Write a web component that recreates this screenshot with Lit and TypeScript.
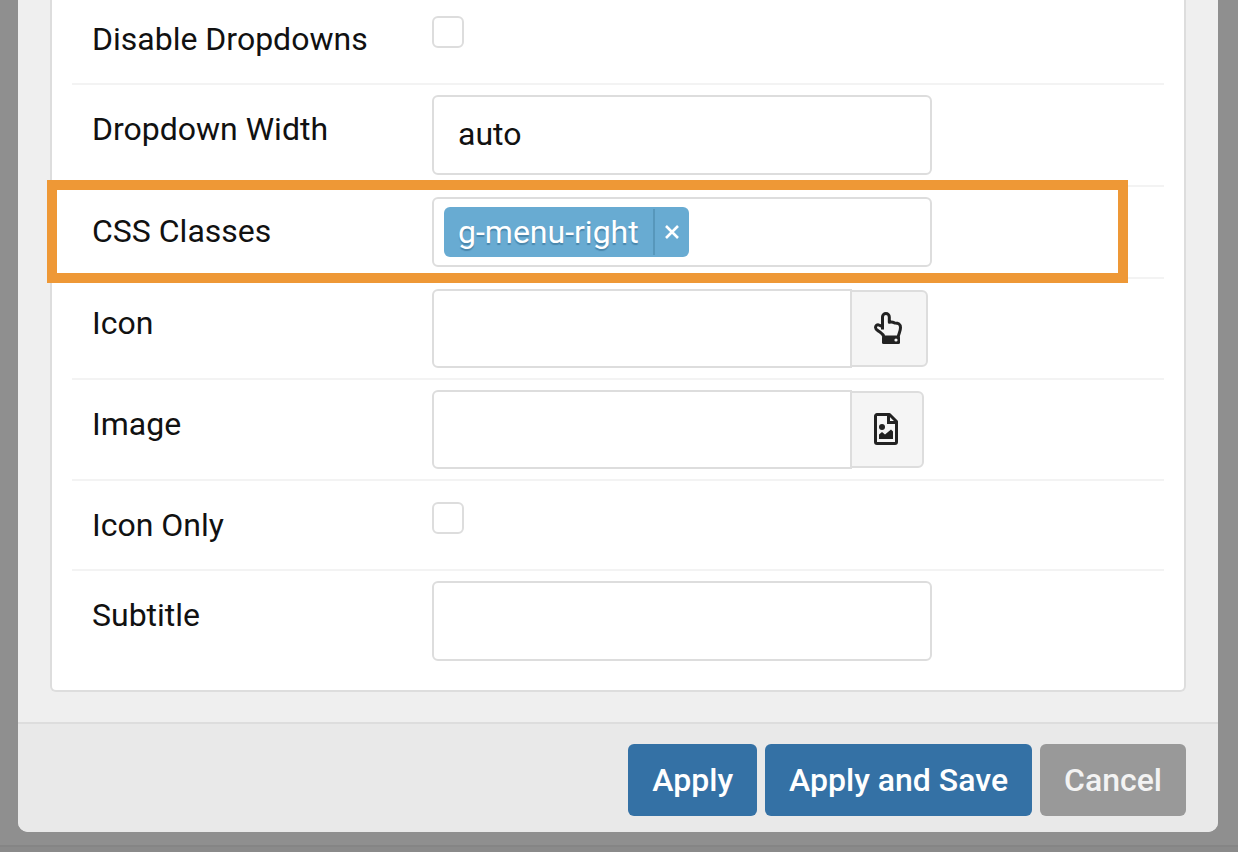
import { LitElement, html, css } from "lit";
import { customElement, state } from "lit/decorators.js";

const handIcon = html`<svg class="glyph" width="30" height="33" viewBox="0 0 30 33" aria-hidden="true">
  <path d="M8.500 17.500V5a3.400 3.400 0 0 1 6.800 0v5.300c2.600-.5 4 0 5.200.6 3.800-.2 6 1.300 6 4.600 0 3.900-1.900 6-2.300 9.500H10c-.6-3-2.600-4-4.800-5.500-2-1.300-3.700-1.900-3.700-3.900 0-1.900 1.300-2.900 3.100-2.700 1.500.2 2.600 1.200 3.900 1.700" fill="none" stroke="#222" stroke-width="3" stroke-linejoin="round"/>
  <rect x="8" y="24" width="18" height="8" rx="1.500" fill="#222"/>
  <circle cx="22" cy="28" r="1.600" fill="#f5f5f5"/>
</svg>`;

const imageIcon = html`<svg class="glyph" width="26" height="33" viewBox="0 0 26 33" aria-hidden="true">
  <path d="M3 1.500h12.500l7 7V29a1.500 1.500 0 0 1-1.500 1.500H3A1.500 1.500 0 0 1 1.500 29V3A1.500 1.500 0 0 1 3 1.500z" fill="none" stroke="#222" stroke-width="3" stroke-linejoin="round"/>
  <path d="M14.500 1.500v8h8" fill="none" stroke="#222" stroke-width="3"/>
  <circle cx="8" cy="14" r="3" fill="#222"/>
  <path d="M5 26v-4.500l3-2.500 3 2.500 6-5 2 2V26z" fill="#222"/>
</svg>`;

@customElement("app-root")
export class AppRoot extends LitElement {
  @state() private classes = ["g-menu-right"];

  static styles = css`
    :host {
      display: block;
      min-height: 100vh;
      overflow: hidden;
      box-sizing: border-box;
      background: #8f8f8f;
      font-family: Roboto, "Liberation Sans", sans-serif;
      font-size: 32px;
      line-height: 48px;
      color: #111;
    }
    * { box-sizing: border-box; }
    .modal {
      margin: 0 20px 0 18px;
      background: #efefef;
      border-radius: 0 0 10px 10px;
      overflow: hidden;
    }
    .body { padding: 0 32px 30px; }
    .card {
      margin-top: -5px;
      padding: 0 20px 19px;
      background: #fff;
      border: 2px solid #ddd;
      border-top: 0;
      border-radius: 0 0 6px 6px;
    }
    .row {
      position: relative;
      display: grid;
      grid-template-columns: 340px minmax(0, 1fr);
      align-items: start;
      padding: 10px 20px;
      border-bottom: 2px solid #f3f3f3;
    }
    .row:last-child { border-bottom: 0; }
    .name { padding: 10px 0; }
    .highlight::after {
      content: "";
      position: absolute;
      inset: -7px 36px -6px -25px;
      border: 10px solid #ee9836;
      pointer-events: none;
      z-index: 1;
    }
    .text, .tags {
      width: 100%;
      max-width: 500px;
      border: 2px solid #ddd;
      border-radius: 6px;
      background: #fff;
    }
    .text {
      display: block;
      height: 80px;
      padding: 0 24px 2px;
      font: inherit;
      color: inherit;
      outline: 0;
    }
    .check {
      appearance: none;
      display: block;
      width: 32px;
      height: 32px;
      margin: 11px 0 0;
      border: 2px solid #ddd;
      border-radius: 6px;
      background: #fff;
    }
    .tags { display: flex; height: 70px; padding: 8px 10px; }
    .tag {
      display: flex;
      height: 50px;
      background: #68abd2;
      border-radius: 6px;
      color: #fff;
      text-shadow: 0 2px 1px rgba(0, 51, 83, 0.3);
    }
    .tag-text { padding: 0 14px; line-height: 50px; }
    .remove {
      display: flex;
      align-items: center;
      justify-content: center;
      width: 36px;
      margin: 2px 0;
      padding: 0;
      border: 0;
      border-left: 2px solid #5797bb;
      background: none;
    }
    .tag-input {
      flex: 1;
      min-width: 0;
      border: 0;
      padding: 0 8px;
      font: inherit;
      outline: 0;
      background: none;
    }
    .group { display: flex; align-items: center; }
    .group .text { height: 79px; max-width: 420px; border-radius: 6px 0 0 6px; }
    .pick {
      display: flex;
      align-items: center;
      justify-content: center;
      height: 77px;
      margin-left: -2px;
      padding: 0 22px;
      border: 2px solid #ddd;
      border-radius: 0 6px 6px 0;
      background: #f5f5f5;
    }
    .glyph { display: block; }
    .footer {
      display: flex;
      justify-content: flex-end;
      gap: 8px;
      padding: 20px 32px 16px;
      border-top: 2px solid #ddd;
      background: #e9e9e9;
    }
    .button {
      height: 72px;
      padding: 0 24px;
      border: 0;
      border-radius: 6px;
      background: #3471a5;
      color: #fff;
      font: inherit;
      font-weight: 500;
    }
    .muted { background: #999; color: #f3f3f3; }
    .page-edge {
      height: 7px;
      margin-top: 13px;
      border-top: 2px solid #858585;
      background: #8a8a8a;
    }
  `;

  private remove(name: string) {
    this.classes = this.classes.filter((c) => c !== name);
  }

  render() {
    return html`
      <div class="modal" role="dialog" aria-label="Menu item">
        <div class="body">
          <div class="card">
            <div class="row">
              <label class="name" for="disable">Disable Dropdowns</label>
              <input class="check" id="disable" type="checkbox" />
            </div>
            <div class="row">
              <label class="name" for="width">Dropdown Width</label>
              <input class="text" id="width" type="text" value="auto" />
            </div>
            <div class="row highlight">
              <label class="name" for="classes">CSS Classes</label>
              <div class="tags">
                ${this.classes.map(
                  (name) => html`<span class="tag">
                    <span class="tag-text">${name}</span>
                    <button class="remove" aria-label="Remove ${name}" @click=${() => this.remove(name)}>
                      <svg width="16" height="16" viewBox="0 0 16 16" aria-hidden="true">
                        <path d="M2 2l12 12M14 2L2 14" stroke="#fff" stroke-width="2.600" />
                      </svg>
                    </button>
                  </span>`
                )}
                <input class="tag-input" id="classes" type="text" />
              </div>
            </div>
            <div class="row">
              <label class="name" for="icon">Icon</label>
              <div class="group">
                <input class="text" id="icon" type="text" />
                <button class="pick" aria-label="Pick an icon">${handIcon}</button>
              </div>
            </div>
            <div class="row">
              <label class="name" for="image">Image</label>
              <div class="group">
                <input class="text" id="image" type="text" />
                <button class="pick" aria-label="Pick an image">${imageIcon}</button>
              </div>
            </div>
            <div class="row">
              <label class="name" for="icon-only">Icon Only</label>
              <input class="check" id="icon-only" type="checkbox" />
            </div>
            <div class="row">
              <label class="name" for="subtitle">Subtitle</label>
              <input class="text" id="subtitle" type="text" />
            </div>
          </div>
        </div>
        <div class="footer">
          <button class="button">Apply</button>
          <button class="button">Apply and Save</button>
          <button class="button muted">Cancel</button>
        </div>
      </div>
      <div class="page-edge"></div>
    `;
  }
}
